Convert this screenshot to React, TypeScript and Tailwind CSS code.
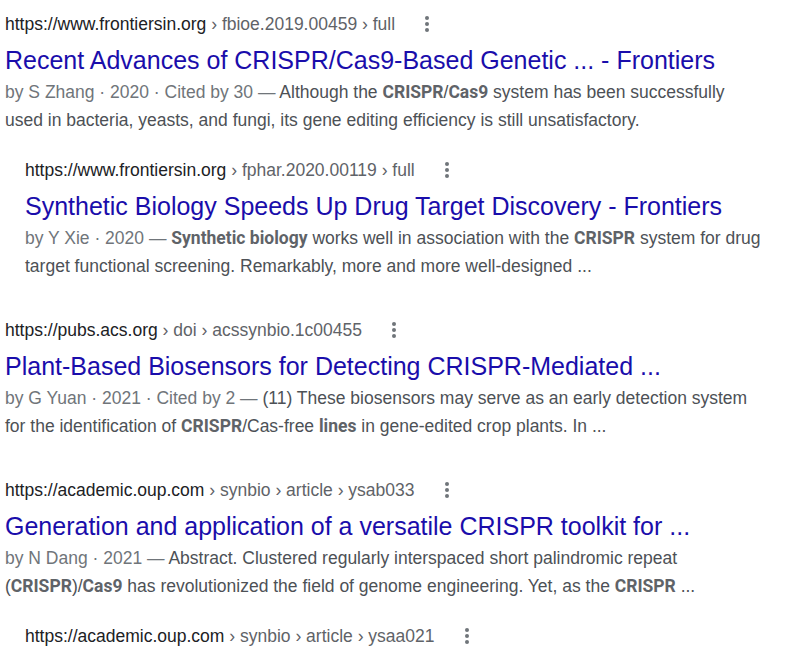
import React from 'react';

type Part = { t: string; b?: boolean };

interface Result {
  site: string;
  crumbs: string[];
  title: string;
  meta: string;
  snippet: Part[];
  sub?: boolean;
  gapAfter?: 'sm' | 'lg';
}

const results: Result[] = [
  {
    site: 'https://www.frontiersin.org',
    crumbs: ['fbioe.2019.00459', 'full'],
    title: 'Recent Advances of CRISPR/Cas9-Based Genetic ... - Frontiers',
    meta: 'by S Zhang · 2020 · Cited by 30 — ',
    snippet: [
      { t: 'Although the ' },
      { t: 'CRISPR', b: true },
      { t: '/' },
      { t: 'Cas9', b: true },
      { t: ' system has been successfully used in bacteria, yeasts, and fungi, its gene editing efficiency is still unsatisfactory.' },
    ],
    gapAfter: 'sm',
  },
  {
    site: 'https://www.frontiersin.org',
    crumbs: ['fphar.2020.00119', 'full'],
    title: 'Synthetic Biology Speeds Up Drug Target Discovery - Frontiers',
    meta: 'by Y Xie · 2020 — ',
    snippet: [
      { t: 'Synthetic biology', b: true },
      { t: ' works well in association with the ' },
      { t: 'CRISPR', b: true },
      { t: ' system for drug target functional screening. Remarkably, more and more well-designed ...' },
    ],
    sub: true,
    gapAfter: 'lg',
  },
  {
    site: 'https://pubs.acs.org',
    crumbs: ['doi', 'acssynbio.1c00455'],
    title: 'Plant-Based Biosensors for Detecting CRISPR-Mediated ...',
    meta: 'by G Yuan · 2021 · Cited by 2 — ',
    snippet: [
      { t: '(11) These biosensors may serve as an early detection system for the identification of ' },
      { t: 'CRISPR', b: true },
      { t: '/Cas-free ' },
      { t: 'lines', b: true },
      { t: ' in gene-edited crop plants. In ...' },
    ],
    gapAfter: 'lg',
  },
  {
    site: 'https://academic.oup.com',
    crumbs: ['synbio', 'article', 'ysab033'],
    title: 'Generation and application of a versatile CRISPR toolkit for ...',
    meta: 'by N Dang · 2021 — ',
    snippet: [
      { t: 'Abstract. Clustered regularly interspaced short palindromic repeat (' },
      { t: 'CRISPR', b: true },
      { t: ')/' },
      { t: 'Cas9', b: true },
      { t: ' has revolutionized the field of genome engineering. Yet, as the ' },
      { t: 'CRISPR', b: true },
      { t: ' ...' },
    ],
    gapAfter: 'sm',
  },
];

function Dots() {
  return (
    <span className="ml-[28px] inline-flex flex-col items-center gap-[2px] px-[2px]">
      <span className="w-[4px] h-[4px] rounded-full bg-[#70757a]" />
      <span className="w-[4px] h-[4px] rounded-full bg-[#70757a]" />
      <span className="w-[4px] h-[4px] rounded-full bg-[#70757a]" />
    </span>
  );
}

function UrlLine({ site, crumbs }: { site: string; crumbs: string[] }) {
  return (
    <div className="flex items-center h-[28px] text-[17.5px] leading-[28px] whitespace-nowrap">
      <span>
        <span className="text-[#202124]">{site}</span>
        <span className="text-[#5f6368]">{' › ' + crumbs.join(' › ')}</span>
      </span>
      <Dots />
    </div>
  );
}

function ResultBlock({ r }: { r: Result }) {
  return (
    <div className={`${r.sub ? 'pl-[20px]' : ''} ${r.gapAfter === 'lg' ? 'mb-[36px]' : 'mb-[22px]'}`}>
      <UrlLine site={r.site} crumbs={r.crumbs} />
      <div className="mt-[6px] text-[25px] leading-[32px] text-[#1a0dab] whitespace-nowrap">{r.title}</div>
      <div className="mt-[2px] text-[17.5px] leading-[28px] text-[#4d5156] max-w-[760px]">
        <span className="text-[#70757a]">{r.meta}</span>
        {r.snippet.map((p, i) =>
          p.b ? (
            <b key={i} className="font-bold text-[#5f6368] font-['Roboto',sans-serif]">{p.t}</b>
          ) : (
            <span key={i}>{p.t}</span>
          )
        )}
      </div>
    </div>
  );
}

export default function App() {
  return (
    <div className="w-[791px] h-[660px] overflow-hidden bg-white pt-[10px] pl-[5px] font-['Liberation_Sans',Arial,sans-serif]">
      {results.map((r, i) => (
        <ResultBlock key={i} r={r} />
      ))}
      <div className="pl-[20px]">
        <UrlLine site="https://academic.oup.com" crumbs={['synbio', 'article', 'ysaa021']} />
      </div>
    </div>
  );
}
